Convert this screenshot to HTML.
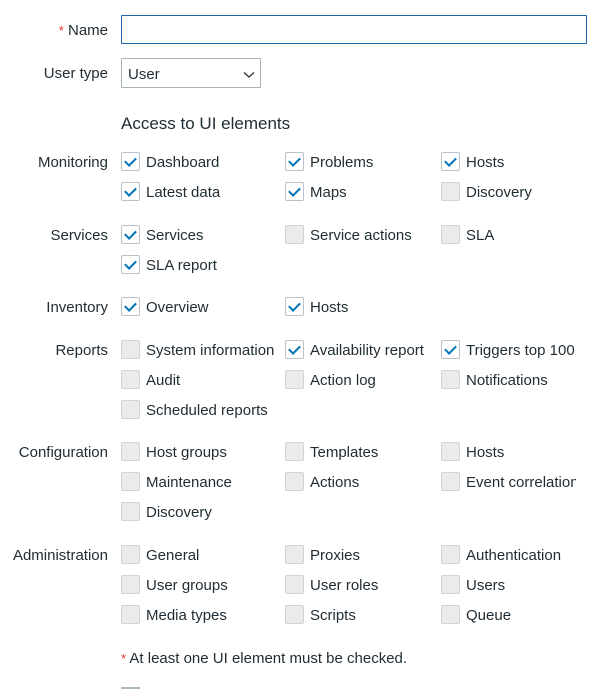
<!DOCTYPE html>
<html><head><meta charset="utf-8"><style>
body{margin:0;width:602px;height:689px;overflow:hidden;background:#fff;font-family:"Liberation Sans",Arial,sans-serif;font-size:15px;color:#1f2c33;position:relative}
.l{position:absolute;right:494px;line-height:22px;white-space:nowrap;margin-top:2px}
.c{position:absolute;width:17px;height:17px;border:1px solid #cfd4d8;border-radius:2px;background:#ebebeb;margin-top:1px}
.c.k{background:#fff;border-color:#b9c2c8}
.c.k::after{content:"";position:absolute;left:5px;top:2px;width:5px;height:9px;border:solid #0275b8;border-width:0 2px 2px 0;transform:rotate(45deg)}
.t{position:absolute;line-height:22px;white-space:nowrap;margin-top:2px}
.r{color:#e33734}
</style></head><body>
<div class="l" style="top:18px"><span class="r" style="font-size:13px">*</span> Name</div>
<div style="position:absolute;left:121px;top:15px;width:464px;height:27px;border:1px solid #1f65a6;border-radius:1px"></div>
<div class="l" style="top:61px">User type</div>
<div style="position:absolute;left:121px;top:58px;width:138px;height:28px;border:1px solid #aab4bb;border-radius:1px"><span style="position:absolute;left:6px;top:7px">User</span>
<svg style="position:absolute;left:121px;top:12px" width="12" height="8"><path d="M1 1.5L6 6L11 1.5" fill="none" stroke="#333" stroke-width="1.3"/></svg></div>
<div class="t" style="left:121px;top:113px;font-size:17px;line-height:21px;margin-top:0">Access to UI elements</div>

<div class="l" style="top:150px">Monitoring</div>
<div class="l" style="top:223px">Services</div>
<div class="l" style="top:295px">Inventory</div>
<div class="l" style="top:338px">Reports</div>
<div class="l" style="top:440px">Configuration</div>
<div class="l" style="top:543px">Administration</div>

<div class="c k" style="left:121px;top:151px"></div><div class="t" style="left:146px;top:150px">Dashboard</div>
<div class="c k" style="left:285px;top:151px"></div><div class="t" style="left:310px;top:150px">Problems</div>
<div class="c k" style="left:441px;top:151px"></div><div class="t" style="left:466px;top:150px">Hosts</div>
<div class="c k" style="left:121px;top:181px"></div><div class="t" style="left:146px;top:180px">Latest data</div>
<div class="c k" style="left:285px;top:181px"></div><div class="t" style="left:310px;top:180px">Maps</div>
<div class="c" style="left:441px;top:181px"></div><div class="t" style="left:466px;top:180px">Discovery</div>

<div class="c k" style="left:121px;top:224px"></div><div class="t" style="left:146px;top:223px">Services</div>
<div class="c" style="left:285px;top:224px"></div><div class="t" style="left:310px;top:223px">Service actions</div>
<div class="c" style="left:441px;top:224px"></div><div class="t" style="left:466px;top:223px">SLA</div>
<div class="c k" style="left:121px;top:254px"></div><div class="t" style="left:146px;top:253px">SLA report</div>

<div class="c k" style="left:121px;top:296px"></div><div class="t" style="left:146px;top:295px">Overview</div>
<div class="c k" style="left:285px;top:296px"></div><div class="t" style="left:310px;top:295px">Hosts</div>

<div class="c" style="left:121px;top:339px"></div><div class="t" style="left:146px;top:338px">System information</div>
<div class="c k" style="left:285px;top:339px"></div><div class="t" style="left:310px;top:338px">Availability report</div>
<div class="c k" style="left:441px;top:339px"></div><div class="t" style="left:466px;top:338px">Triggers top 100</div>
<div class="c" style="left:121px;top:369px"></div><div class="t" style="left:146px;top:368px">Audit</div>
<div class="c" style="left:285px;top:369px"></div><div class="t" style="left:310px;top:368px">Action log</div>
<div class="c" style="left:441px;top:369px"></div><div class="t" style="left:466px;top:368px">Notifications</div>
<div class="c" style="left:121px;top:399px"></div><div class="t" style="left:146px;top:398px">Scheduled reports</div>

<div class="c" style="left:121px;top:441px"></div><div class="t" style="left:146px;top:440px">Host groups</div>
<div class="c" style="left:285px;top:441px"></div><div class="t" style="left:310px;top:440px">Templates</div>
<div class="c" style="left:441px;top:441px"></div><div class="t" style="left:466px;top:440px">Hosts</div>
<div class="c" style="left:121px;top:471px"></div><div class="t" style="left:146px;top:470px">Maintenance</div>
<div class="c" style="left:285px;top:471px"></div><div class="t" style="left:310px;top:470px">Actions</div>
<div class="c" style="left:441px;top:471px"></div><div class="t" style="left:466px;top:470px;width:110px;overflow:hidden">Event correlation</div>
<div class="c" style="left:121px;top:501px"></div><div class="t" style="left:146px;top:500px">Discovery</div>

<div class="c" style="left:121px;top:544px"></div><div class="t" style="left:146px;top:543px">General</div>
<div class="c" style="left:285px;top:544px"></div><div class="t" style="left:310px;top:543px">Proxies</div>
<div class="c" style="left:441px;top:544px"></div><div class="t" style="left:466px;top:543px">Authentication</div>
<div class="c" style="left:121px;top:574px"></div><div class="t" style="left:146px;top:573px">User groups</div>
<div class="c" style="left:285px;top:574px"></div><div class="t" style="left:310px;top:573px">User roles</div>
<div class="c" style="left:441px;top:574px"></div><div class="t" style="left:466px;top:573px">Users</div>
<div class="c" style="left:121px;top:604px"></div><div class="t" style="left:146px;top:603px">Media types</div>
<div class="c" style="left:285px;top:604px"></div><div class="t" style="left:310px;top:603px">Scripts</div>
<div class="c" style="left:441px;top:604px"></div><div class="t" style="left:466px;top:603px">Queue</div>

<div class="t" style="left:121px;top:646px"><span class="r" style="font-size:13px">*</span> At least one UI element must be checked.</div>
<div style="position:absolute;left:121px;top:687px;width:19px;height:2px;background:#aab8c2"></div>
</body></html>
